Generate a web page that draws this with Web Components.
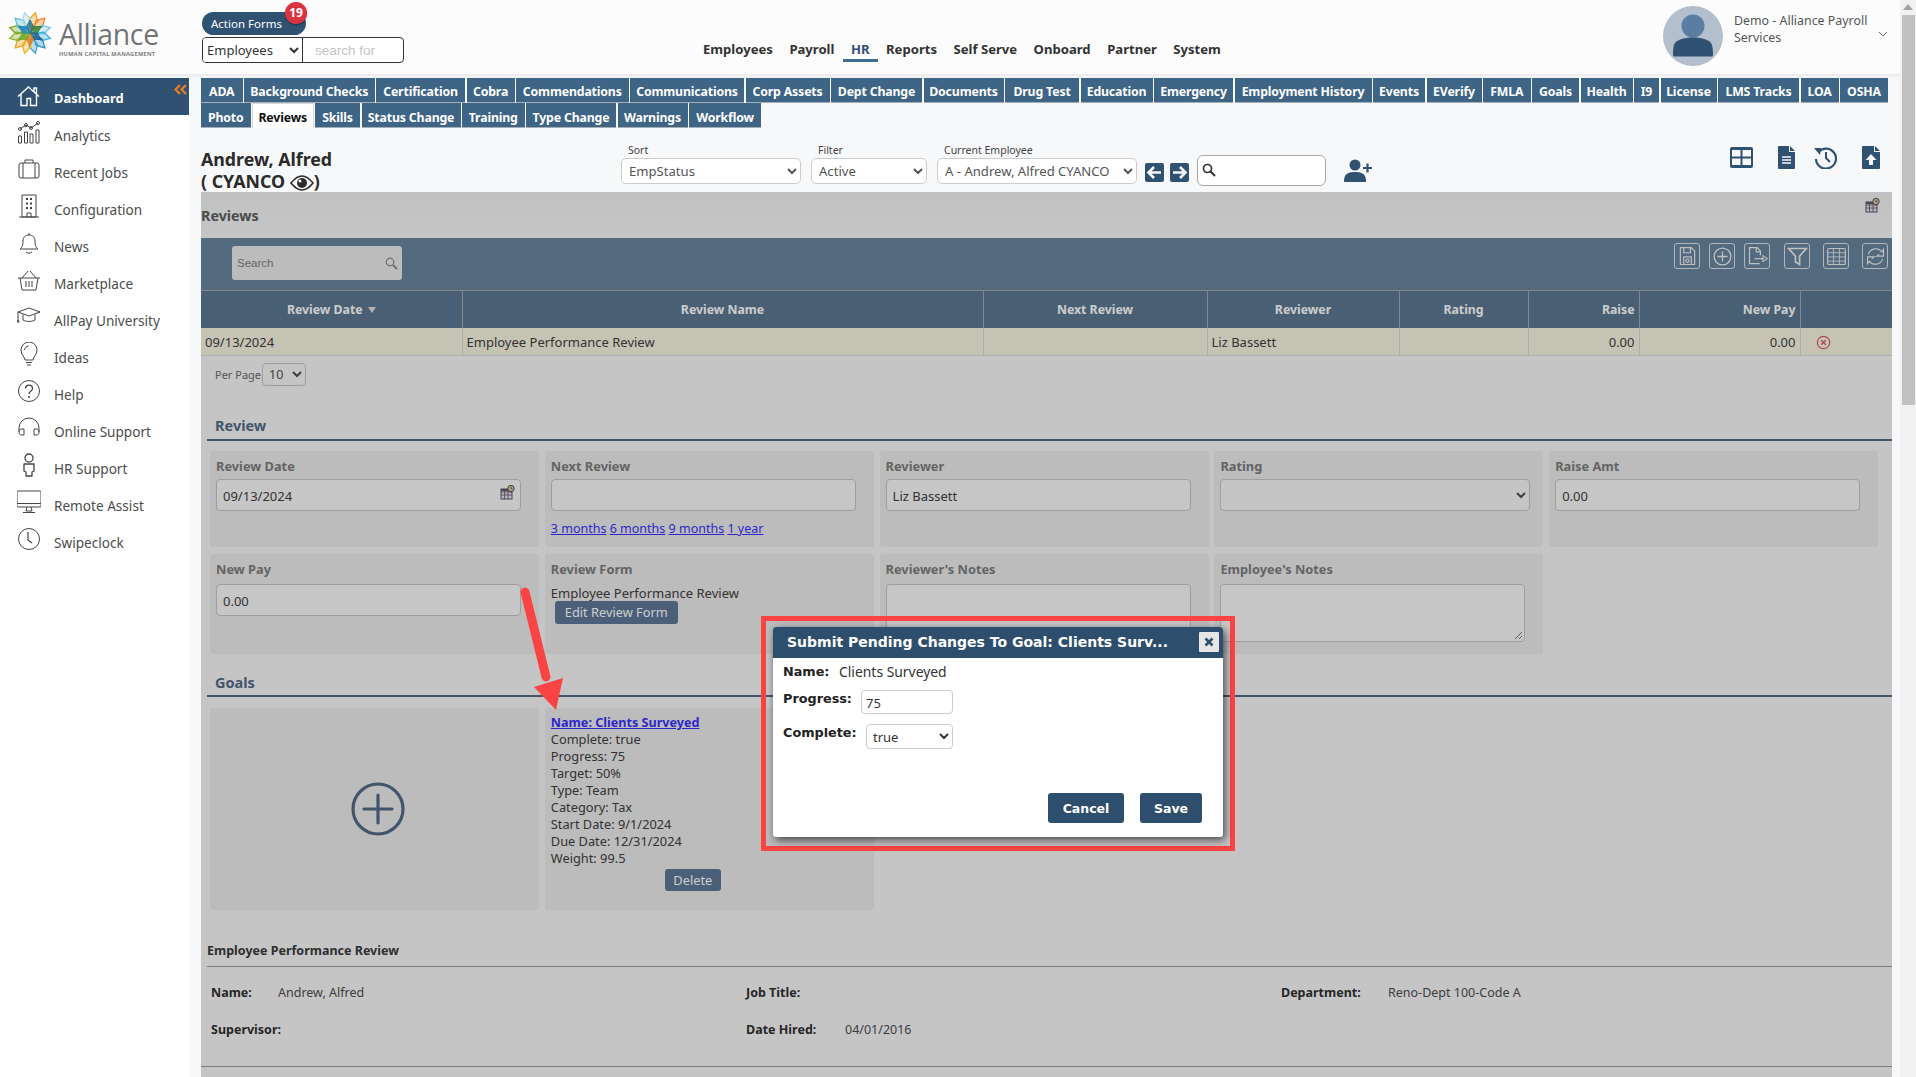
<!DOCTYPE html>
<html><head><meta charset="utf-8"><title>Reviews</title>
<style>
html,body{margin:0;padding:0;height:1077px;overflow:hidden;background:#f3f4f6;font-family:"Noto Sans","Open Sans",sans-serif;font-size:13px;color:#404040}
</style></head><body>
<app-shell>
  <app-header slot="header"></app-header>
  <app-sidebar slot="side"></app-sidebar>
  <app-tabs slot="main"></app-tabs>
  <emp-bar slot="main"></emp-bar>
  <review-page slot="main"></review-page>
  <fake-scroll slot="scroll"></fake-scroll>
  <red-arrow slot="over"></red-arrow>
  <goal-dialog slot="over"></goal-dialog>
</app-shell>
<script>
const def=(name,css,html)=>customElements.define(name,class extends HTMLElement{
  connectedCallback(){ if(this.shadowRoot) return;
    const r=this.attachShadow({mode:'open'});
    r.innerHTML='<style>'+css+'</style>'+(typeof html==='function'?html(this):html);
  }});
const S=(w,h,vb,body,extra='')=>`<svg width="${w}" height="${h}" viewBox="${vb}" ${extra}>${body}</svg>`;

def('app-shell',`
:host{display:grid;position:relative;grid-template-columns:1900px 16px;width:1916px;height:1077px;overflow:hidden}
.l{display:flex;flex-direction:column;height:1077px}
.b{display:flex;flex:1;margin-top:4px;min-height:0}
.m{flex:1;padding:0 8px 0 12px;background:#f7f8fa;min-width:0}
`,`<div class="l"><slot name="header"></slot><div class="b"><slot name="side"></slot><div class="m"><slot name="main"></slot></div></div></div><slot name="scroll"></slot><slot name="over"></slot>`);

/* logo */
function logo(){
  const cols=['#f0a21e','#f58220','#7cc6e8','#3fb0dd','#2b8fc7','#44a5d8','#f2b51d','#f0a21e','#8fb52d','#7bab2a','#5fc4d8','#a9dbe9'];
  let s='';
  cols.forEach((c,i)=>{ s+=`<polygon transform="rotate(${i*30+15} 24 22)" points="24,1 28.5,9 24,17 19.5,9" fill="${c}" fill-opacity=".35" stroke="${c}" stroke-width="1.3"/>`;});
  const c2=['#1f6f8f','#2e7d32','#1c5d8a','#e07b1a','#6aa82a','#1a84b8'];
  c2.forEach((c,i)=>{ s+=`<polygon transform="rotate(${i*60} 24 22)" points="24,9 27.5,15.5 24,22 20.5,15.5" fill="${c}" fill-opacity=".75" stroke="${c}" stroke-width=".9"/>`;});
  return S(48,44,'0 0 48 44',s);
}
def('app-header',`
:host{display:flex;height:74px;background:#fcfcfd;box-shadow:0 1px 3px rgba(0,0,0,.06);color:#333;position:relative}
.lg{width:202px;box-sizing:border-box;padding:11px 0 0 6px;display:flex;gap:5px;position:relative}
.lg svg{flex:none}
.brand{font:400 28.400px/34px "Open Sans",sans-serif;color:#737476;letter-spacing:-.3px;margin-top:6px;height:34px}
.tag{position:absolute;left:59px;top:50px;font:700 5.700px/8px "Noto Sans",sans-serif;color:#7b7c7e;letter-spacing:.25px;white-space:nowrap}
.af{width:501px;box-sizing:border-box;padding-top:12px;position:relative}
.pill{width:104px;height:23px;box-sizing:border-box;background:#2f5273;color:#fff;border-radius:12px;font-size:11.500px;line-height:23px;padding-left:9px}
.badge{position:absolute;left:83px;top:2px;width:22px;height:22px;border-radius:50%;background:#d9343f;color:#fff;font:700 12px/22px "Noto Sans",sans-serif;text-align:center;box-shadow:0 1px 2px rgba(0,0,0,.4)}
.sr{display:flex;margin-top:2px;width:202px;height:26px;box-sizing:border-box;border:1px solid #333;border-radius:4px;overflow:hidden;background:#fff}
select{width:100px;border:0;border-right:1px solid #333;background:#fff;font:13px "Noto Sans",sans-serif;color:#333;padding:0;outline:0}
.q{flex:1;color:#c4c4c4;font:13.500px/26px "Liberation Sans",sans-serif;padding-left:12px}
nav{display:flex;gap:16.500px;padding-top:39px;flex:1;font-size:13.100px;font-weight:700;line-height:20px}
nav span{position:relative;white-space:nowrap}
nav .on{color:#2f5273}
nav .on::after{content:"";position:absolute;left:-8px;right:-8px;top:20px;height:3px;background:#3e6c96}
.u{width:237px;flex:none;display:flex;position:relative;box-sizing:border-box;padding:6px 0 0 0}
.u svg{flex:none}
.u div{font-size:12.400px;line-height:17px;color:#555;width:150px;margin:6px 0 0 11px}
.u svg.ch{position:absolute;left:214px;top:30px}
`,`<div class="lg">${logo()}<div class="brand">Alliance</div><div class="tag">HUMAN CAPITAL MANAGEMENT</div></div>
<div class="af"><div class="pill">Action Forms</div><div class="badge">19</div>
<div class="sr"><select><option>Employees</option></select><div class="q">search for</div></div></div>
<nav><span>Employees</span><span>Payroll</span><span class="on">HR</span><span>Reports</span><span>Self Serve</span><span>Onboard</span><span>Partner</span><span>System</span></nav>
<div class="u">${S(60,60,'0 0 60 60','<circle cx="30" cy="30" r="30" fill="#b3bfcd"/><circle cx="30" cy="20" r="11.500" fill="#5b7da2"/><path d="M10 49c0-2 0-9 2-12 3-4 11-5.500 18-5.500s15 1.500 18 5.500c2 3 2 10 2 12-0 1-1 1.500-2 1.500H12c-1 0-2-.5-2-1.500z" fill="#2f5273"/>')}
<div>Demo - Alliance Payroll Services</div>${S(12,8,'0 0 12 8','<path d="M2 2l4 4 4-4" fill="none" stroke="#666" stroke-width="1"/>','class="ch"')}</div>`);

const ic={
home:'<path d="M1 11.500L11.500 2 22 11.500M4 9v11.500h6v-7h3.500v7h6V9M17 6.500V3h2.500v5.500" fill="none" stroke="#fff" stroke-width="1.400"/>',
an:'<path d="M3 9l6-4 5 3 7-5" fill="none" stroke="#444" stroke-width="1"/><circle cx="3" cy="9" r="1.500" fill="none" stroke="#444"/><circle cx="9" cy="5" r="1.500" fill="none" stroke="#444"/><circle cx="14" cy="8" r="1.500" fill="none" stroke="#444"/><circle cx="21" cy="3" r="1.500" fill="none" stroke="#444"/><path d="M1.500 16h3v7h-3zM7.500 12h3v11h-3zM13 14h3v9h-3zM19 10h3v13h-3z" fill="none" stroke="#444"/>',
job:'<rect x="2" y="6" width="20" height="15" rx="2" fill="none" stroke="#444"/><path d="M8 6V3h8v3M6 6v15M18 6v15" fill="none" stroke="#444"/>',
cfg:'<path d="M5 1h14v22H5zM2 23h20M10 23v-4h4v4" fill="none" stroke="#444"/><path d="M9 4h2v2H9zM13 4h2v2h-2zM9 8.500h2v2H9zM13 8.500h2v2h-2zM9 13h2v2H9zM13 13h2v2h-2z" fill="#444"/>',
bell:'<path d="M3 18c2-2 3-3 3-8 0-4 2.500-6 6-6s6 2 6 6c0 5 1 6 3 8zM12 4V2M9 21c1.500 1.500 4.500 1.500 6 0" fill="none" stroke="#444"/>',
bask:'<path d="M1 10h22M3 10l2 12h14l2-12M5 10l6-7M19 10l-6-7M9 13v6M12 13v6M15 13v6" fill="none" stroke="#444"/>',
grad:'<path d="M1 7l11-4 11 4-11 4zM6 9.500V15c4 2 8 2 12 0V9.500M1 7v8M-.2 17l1.200-2 1.200 2z" fill="none" stroke="#444"/>',
bulb:'<path d="M8 18c0-3-4-5-4-10a8 8 0 0116 0c0 5-4 7-4 10zM9 20.500h6M10 23h4M7.500 8c0-2 2-4 4-4" fill="none" stroke="#444"/>',
q:'<circle cx="12" cy="12" r="10.500" fill="none" stroke="#444"/><path d="M8.500 9.500c0-4.500 7-4.500 7 0 0 3-3.500 2.500-3.500 5.500" fill="none" stroke="#444" stroke-width="1.300"/><circle cx="12" cy="18" r="1" fill="#444"/>',
head:'<path d="M2 16v-4a10 10 0 0120 0v4" fill="none" stroke="#444"/><path d="M7 13H5c-2 0-3 1-3 3s1 3 3 3h2zM17 13h2c2 0 3 1 3 3s-1 3-3 3h-2z" fill="none" stroke="#444"/>',
hr:'<circle cx="12" cy="5" r="4" fill="none" stroke="#444" stroke-width="1.300"/><path d="M7 11h10v7l-2 1v4H9v-4l-2-1z" fill="none" stroke="#444" stroke-width="1.300" stroke-linejoin="round"/>',
mon:'<rect x="0" y="1" width="24" height="16" rx="1" fill="none" stroke="#444"/><path d="M0 13.500h24M10 17l-1 4h6l-1-4M6 22.500h12" fill="none" stroke="#444"/>',
clk:'<circle cx="12" cy="12" r="10.500" fill="none" stroke="#444"/><path d="M11 5v8l4 3" fill="none" stroke="#444" stroke-width="1.200"/>'
};
const side=[['Analytics','an'],['Recent Jobs','job'],['Configuration','cfg'],['News','bell'],['Marketplace','bask'],['AllPay University','grad'],['Ideas','bulb'],['Help','q'],['Online Support','head'],['HR Support','hr'],['Remote Assist','mon'],['Swipeclock','clk']];
def('app-sidebar',`
:host{display:block;width:189px;background:#fff;flex:none;color:#4d4d4d}
.r{height:37px;display:flex;align-items:center;padding:3px 0 0 17px;font-size:13.600px;box-sizing:border-box;position:relative}
.r svg{flex:none;margin:-7px 13px 0 0}
.a{background:#2f5273;color:#fff;font-weight:700;font-size:12.900px}
.a svg{margin-top:-3px}
.r svg.col{position:absolute;left:174px;top:6px;margin:0}
`,`<div class="r a">${S(24,24,'0 0 24 24',ic.home)}Dashboard${S(13,11,'0 0 13 11','<path d="M6 1L1.500 5.500 6 10M12 1L7.500 5.500 12 10" fill="none" stroke="#f07d1a" stroke-width="2.200"/>','class="col"')}</div>`+side.map(s=>`<div class="r">${S(24,24,'0 0 24 24',ic[s[1]])}${s[0]}</div>`).join(''));

const t1=[['ADA',41.500],['Background Checks',130.500],['Certification',89],['Cobra',48],['Commendations',112.500],['Communications',114],['Corp Assets',84],['Dept Change',91],['Documents',80],['Drug Test',74],['Education',72],['Emergency',79],['Employment History',137],['Events',52],['EVerify',55],['FMLA',47.500],['Goals',47],['Health',52],['I9',25],['License',56],['LMS Tracks',81],['LOA',38],['OSHA',48]];
const t2=[['Photo',49.500],['Reviews',61.500,1],['Skills',45],['Status Change',99],['Training',62.500],['Type Change',90],['Warnings',70],['Workflow',72]];
const tabrow=a=>`<div class="row">`+a.map(t=>`<span class="${t[2]?'on':''}" style="width:${t[1]}px">${t[0]}</span>`).join('')+`</div>`;
def('app-tabs',`
:host{display:block;height:50px}
.row{display:flex;gap:1.500px;height:25px}
span{box-sizing:border-box;background:#3e6585;color:#fff;font-weight:700;font-size:12.300px;letter-spacing:-.15px;line-height:27.500px;text-align:center;border-bottom:1px solid #a5adb5;white-space:nowrap;overflow:hidden;flex:none}
.row+.row span{line-height:29px}
.row+.row span.on{background:#fff;color:#111;border:1px solid #d4dade;border-bottom:0;line-height:27.500px}
`,tabrow(t1)+tabrow(t2));

def('emp-bar',`
:host{display:flex;height:64px;position:relative;color:#333}
.n{width:420px;flex:none;font-size:17.800px;font-weight:700;line-height:22px;padding-top:20px;color:#2b2b2b;box-sizing:border-box;height:64px;white-space:nowrap}
.n svg{vertical-align:-3px}
.f{display:flex;flex-direction:column;padding-top:15px;margin-right:10px}
label{font-size:10.500px;line-height:14px;height:15px;padding-left:7px;color:#444}
select{height:26px;box-sizing:border-box;border:1px solid #ccc;border-radius:5px;background:#fff;font:13.100px "Noto Sans",sans-serif;color:#555;padding-left:3px;outline:0}
.arr{display:flex;gap:6px;margin:35px 0 0 -2px;height:19px}
.arr b{width:19px;height:19px;background:#2f5273;border-radius:2px;display:block}
.s{width:129px;height:31px;box-sizing:border-box;border:1px solid #a8a8a8;border-radius:6px;background:#fff;margin:27px 0 0 8px;padding:7px 0 0 4px;flex:none}
.add{margin:31px 0 0 18px}
.ri{position:absolute;top:18px;left:1529px;display:flex;align-items:center}
`,`<div class="n">Andrew, Alfred<br>( CYANCO ${S(24,16,'0 0 24 16','<path d="M1 8c4-5 7.500-7 11-7s7 2 11 7c-4 5-7.500 7-11 7S5 13 1 8z" fill="none" stroke="#2b2b2b" stroke-width="1.600"/><circle cx="12" cy="8" r="5" fill="#2b2b2b"/><circle cx="10" cy="6" r="1.500" fill="#fff"/>')})</div>
<div class="f"><label>Sort</label><select style="width:180px"><option>EmpStatus</option></select></div>
<div class="f"><label>Filter</label><select style="width:116px"><option>Active</option></select></div>
<div class="f"><label>Current Employee</label><select style="width:200px"><option>A - Andrew, Alfred CYANCO</option></select></div>
<div class="arr"><b>${S(19,19,'0 0 19 19','<path d="M16 9.500H4M9 4l-5.500 5.500L9 15" fill="none" stroke="#f5f7f9" stroke-width="2.600"/>')}</b><b>${S(19,19,'0 0 19 19','<path d="M3 9.500h12M10 4l5.500 5.500L10 15" fill="none" stroke="#f5f7f9" stroke-width="2.600"/>')}</b></div>
<div class="s">${S(14,14,'0 0 14 14','<circle cx="5.500" cy="5.500" r="4" fill="none" stroke="#333" stroke-width="1.700"/><path d="M8.500 8.500l4.500 4.500" stroke="#333" stroke-width="2"/>')}</div>
<div class="add">${S(28,23,'0 0 28 23','<circle cx="11" cy="6" r="5.500" fill="#2f5273"/><path d="M0 23c0-1 0-4 1-6 2-3.500 6-4 10-4s8 .5 10 4c1 2 1 5 1 6z" fill="#2f5273"/><path d="M19 9h9M23.500 4.500v9" stroke="#2f5273" stroke-width="2.200"/>')}</div>
<div class="ri">${S(23,21,'0 0 23 21','<rect width="23" height="21" rx="2" fill="#2f5273"/><path d="M2 3h8.500v6.500H2zM12.500 3H21v6.500h-8.500zM2 11.500h8.500V18H2zM12.500 11.500H21V18h-8.500z" fill="#f7f8fa"/>')}
<span style="width:25px"></span>${S(17,23,'0 0 17 23','<path d="M0 1a1 1 0 011-1h10v6h6v16a1 1 0 01-1 1H1a1 1 0 01-1-1z" fill="#2f5273"/><path d="M12 0l5 5h-5z" fill="#2f5273"/><path d="M4 11h9M4 14h9M4 17h9" stroke="#f7f8fa" stroke-width="1.300"/>')}
<span style="width:19px"></span>${S(23,23,'0 0 23 23','<path d="M4.500 6A10 10 0 112 13" fill="none" stroke="#2f5273" stroke-width="2.200"/><path d="M0 2l7 0-1 7z" fill="#2f5273"/><path d="M12 6v6l4 4" fill="none" stroke="#2f5273" stroke-width="2"/>')}
<span style="width:25px"></span>${S(18,23,'0 0 18 23','<path d="M0 1a1 1 0 011-1h11v6h6v16a1 1 0 01-1 1H1a1 1 0 01-1-1z" fill="#2f5273"/><path d="M13 0l5 5h-5z" fill="#2f5273"/><path d="M9 8l5.500 6H11v5H7v-5H3.500z" fill="#f7f8fa"/>')}</div>`);

const cal=S(15,15,'0 0 15 15','<rect x="1" y="4" width="11" height="10" fill="#e6e3ee" stroke="#5c5566"/><path d="M1 7h11M1 10h11M4.500 4v10M8 4v10" stroke="#5c5566" stroke-width=".8"/><path d="M1 4h11v2H1z" fill="#5c5566"/><circle cx="11" cy="3.500" r="3.200" fill="#d8d0b0" stroke="#5c5040"/><path d="M11 1.800v1.900h1.500" fill="none" stroke="#333" stroke-width=".7"/>');

const tb=[
'<path d="M4 2h13l4 4v16H4zM8 2v6h8V2M8 22v-9h9v9" fill="none" stroke="#f0f0f0" stroke-width="1.400"/><circle cx="12.500" cy="17.500" r="2" fill="none" stroke="#f0f0f0" stroke-width="1.400"/>',
'<circle cx="12.500" cy="12.500" r="10" fill="none" stroke="#f0f0f0" stroke-width="1.500"/><path d="M12.500 6.500v12M6.500 12.500h12" stroke="#f0f0f0" stroke-width="1.500"/>',
'<path d="M15 21H3V2h9l4 4v5" fill="none" stroke="#f0f0f0" stroke-width="1.400"/><path d="M11 2v5h5M9 15h11" fill="none" stroke="#f0f0f0" stroke-width="1.400"/><path d="M19 11.500l5 3.500-5 3.500z" fill="none" stroke="#f0f0f0" stroke-width="1.200"/>',
'<path d="M2 3h21l-8 9v10l-5-3v-7z" fill="none" stroke="#f0f0f0" stroke-width="2"/>',
'<rect x="2" y="3" width="21" height="19" rx="1.500" fill="none" stroke="#f0f0f0" stroke-width="1.400"/><path d="M2 8h21M2 13h21M2 18h21M9 3v19M16 3v19" stroke="#f0f0f0"/>',
'<path d="M4 10a9 9 0 0116-3l2-3v8h-8l3-2M21 15a9 9 0 01-16 3l-2 3v-8h8l-3 2" fill="none" stroke="#f0f0f0" stroke-width="1.300"/>'];
def('tool-bar',`
:host{display:flex;height:52px;background:#68859f;position:relative;align-items:flex-start}
.s{width:170px;height:34px;margin:8px 0 0 31px;background:#ececec;border-radius:3px;box-sizing:border-box;color:#7d7d7d;font:11.500px/35px "Liberation Sans",sans-serif;padding-left:5px;position:relative}
.s svg{position:absolute;right:4px;top:11px}
.i{position:absolute;top:5px;width:26px;height:26px;box-sizing:border-box;border:1px solid #dfe3e8;border-radius:3px;display:flex;align-items:center;justify-content:center}
`,`<div class="s">Search${S(13,13,'0 0 13 13','<circle cx="5" cy="5" r="3.800" fill="none" stroke="#8a8a8a" stroke-width="1.200"/><path d="M8 8l4 4" stroke="#8a8a8a" stroke-width="1.800"/>')}</div>`+
[1473,1508,1543,1583,1622,1661].map((x,i)=>`<div class="i" style="left:${x}px">${S(21,21,'0 0 25 25',tb[i])}</div>`).join(''));

def('data-table',`
:host{display:block}
table{width:1691px;table-layout:fixed;border-collapse:collapse;font-size:13px}
th{height:37px;box-sizing:border-box;background:#5c7792;color:#fff;font-weight:700;font-size:12.300px;border-top:1px solid #a8a8a8;border-right:1px solid #a8a8a8;padding:0 4px;text-align:center}
th.r,td.r{text-align:right}
td{height:28px;box-sizing:border-box;background:#f7f6e1;border-right:1px solid #d8d8d8;border-bottom:1px solid #dcdcdc;padding:2px 4px 0;white-space:nowrap;color:#404040}
th:last-child,td:last-child{border-right:0}
.tri{display:inline-block;border:4px solid transparent;border-top:6px solid #e0e0e0;border-bottom:0;margin-left:5px;vertical-align:1px}
`,`<table><colgroup><col style="width:261px"><col style="width:521px"><col style="width:224px"><col style="width:192px"><col style="width:129px"><col style="width:111px"><col style="width:161px"><col style="width:92px"></colgroup>
<tr><th>Review Date<i class="tri"></i></th><th>Review Name</th><th>Next Review</th><th>Reviewer</th><th>Rating</th><th class="r">Raise</th><th class="r">New Pay</th><th></th></tr>
<tr><td>09/13/2024</td><td>Employee Performance Review</td><td></td><td>Liz Bassett</td><td></td><td class="r">0.00</td><td class="r">0.00</td><td style="padding-left:15px">${S(15,15,'0 0 15 15','<circle cx="7.500" cy="7.500" r="6.200" fill="none" stroke="#e05a68" stroke-width="1.200"/><path d="M5.200 5.200l4.600 4.600M9.800 5.200l-4.600 4.600" stroke="#e05a68" stroke-width="1.400"/>','style="vertical-align:-3px"')}</td></tr></table>`);

def('sec-head',`
:host{display:block;margin-left:6px;border-bottom:2px solid #536b85;color:#536b85;font-weight:700;font-size:14.500px;padding-left:8px;line-height:20px;box-sizing:border-box}
`,`<slot></slot>`);

def('form-panel',`
:host{display:block;background:#ebebeb;border-radius:3px;padding:6px 6px;box-sizing:border-box;position:relative;font-size:13px}
h4{margin:0;font-size:12.800px;line-height:18px;color:#7d7d7d;font-weight:700;height:var(--gap,22px)}
`,p=>(p.getAttribute('label')?`<h4>${p.getAttribute('label')}</h4>`:'')+`<slot></slot>`);

def('text-box',`
:host{display:block;width:305px;height:32px;box-sizing:border-box;border:1px solid #c6c6c6;border-radius:4px;background:#f8f8f8;padding:0 6px;line-height:32px;color:#404040;font-size:13px;position:relative}
svg{position:absolute;right:5px;top:5px}
`,p=>`<slot></slot>`+(p.hasAttribute('cal')?cal:''));

def('goal-card',`
:host{display:block;position:relative;height:190px;padding-top:0}
.ln{line-height:17px;font-size:12.800px;color:#404040;white-space:nowrap}
a{color:#3a30ff;text-decoration:underline;font-weight:700;font-size:12.600px}
.del{position:absolute;left:114px;top:155px;width:56px;height:22px;line-height:22px;background:#5e7897;color:#fff;border-radius:3px;text-align:center;font-size:12.800px}
`,`<div class="ln"><a>Name: Clients Surveyed</a><br>Complete: true<br>Progress: 75<br>Target: 50%<br>Type: Team<br>Category: Tax<br>Start Date: 9/1/2024<br>Due Date: 12/31/2024<br>Weight: 99.5</div><div class="del">Delete</div>`);
def('add-goal',`:host{display:flex;align-items:center;justify-content:center;height:202px;padding-left:7px;box-sizing:border-box}`,
 S(54,54,'0 0 54 54','<circle cx="27" cy="27" r="25" fill="none" stroke="#536b85" stroke-width="3.200"/><path d="M27 13v28M13 27h28" stroke="#536b85" stroke-width="3.200" stroke-linecap="round"/>'));

def('review-page',`
:host{display:block;position:relative;height:885px;background:linear-gradient(#f0f2f1 0,#f7f7f7 46px);overflow:hidden}
.ttl{height:46px;box-sizing:border-box;padding-top:15px;line-height:18px;font-weight:700;font-size:14.300px;color:#5e5e5e;position:relative}
.ttl svg{position:absolute;left:1664px;top:6px}
.pp{box-sizing:border-box;padding:0 0 0 14px;display:flex;align-items:center;height:37px;font-size:11px;color:#6a6a6a}
select{font:12.500px "Noto Sans",sans-serif;background:#f7f7f7;border:1px solid #c6c6c6;border-radius:4px;color:#505050;outline:0}
.pp select{width:44px;height:23px;margin-left:1px;padding:0 2px}
.grid{display:grid;grid-template-columns:repeat(5,329px);gap:7px 5.800px;padding:10px 0 0 9px;grid-template-rows:96px 100px}
a{color:#3a30ff;text-decoration:underline}
.lk{margin-top:9px;font-size:12.500px;line-height:18px;white-space:nowrap}
.btn{display:inline-block;background:#5e7897;color:#fff;border-radius:3px;font-size:12.800px;text-align:center}
.rt{width:310px;height:32px;display:block;padding-left:4px}
.ta{width:305px;height:58px;box-sizing:border-box;border:1px solid #c6c6c6;border-radius:4px;background:#f8f8f8;position:relative}
.ta svg{position:absolute;right:1px;bottom:1px}
.goals{display:grid;grid-template-columns:329px 329px;gap:5.800px;padding:11px 0 0 9px}
.ft{margin:32px 0 0 6px}
.ft h5{margin:0;font-size:12.500px;line-height:18px;color:#3a3a3a;border-bottom:1px solid #9a9a9a;height:24px;font-weight:700;box-sizing:content-box}
.fr{display:grid;grid-template-columns:535px 535px 1fr;padding-left:4px;height:37px;align-items:center;font-size:12.500px;color:#4d4d4d;line-height:18px}
.fr b{display:inline-block;color:#303030;font-weight:700}
.ov{position:absolute;inset:0;background:rgba(0,0,0,.2);pointer-events:none}
.r2{--gap:24px}
`,`<div class="ttl">Reviews${cal}</div>
<tool-bar></tool-bar><data-table></data-table>
<div class="pp">Per Page<select><option>10</option></select></div>
<sec-head style="height:48px;padding-top:22px">Review</sec-head>
<div class="grid">
 <form-panel label="Review Date"><text-box cal>09/13/2024</text-box></form-panel>
 <form-panel label="Next Review"><text-box></text-box><div class="lk"><a>3 months</a> <a>6 months</a> <a>9 months</a> <a>1 year</a></div></form-panel>
 <form-panel label="Reviewer"><text-box>Liz Bassett</text-box></form-panel>
 <form-panel label="Rating"><select class="rt"><option></option></select></form-panel>
 <form-panel label="Raise Amt"><text-box>0.00</text-box></form-panel>
 <form-panel class="r2" label="New Pay"><text-box>0.00</text-box></form-panel>
 <form-panel class="r2" label="Review Form"><div style="line-height:16px;margin-top:1px;white-space:nowrap">Employee Performance Review</div><div class="btn" style="width:123px;height:23px;line-height:23px;margin-left:4px;">Edit Review Form</div></form-panel>
 <form-panel class="r2" label="Reviewer's Notes"><div class="ta"></div></form-panel>
 <form-panel class="r2" label="Employee's Notes"><div class="ta">${S(10,10,'0 0 10 10','<path d="M9 2L2 9M9 6L6 9" stroke="#777"/>')}</div></form-panel>
</div>
<sec-head style="height:43px;padding-top:18px">Goals</sec-head>
<div class="goals">
 <form-panel style="height:202px;padding:0"><add-goal></add-goal></form-panel>
 <form-panel style="height:202px;padding:6px 6px"><goal-card></goal-card></form-panel>
</div>
<div class="ft"><h5>Employee Performance Review</h5>
 <div class="fr" style="margin-top:7px"><span><b style="width:67px">Name:</b>Andrew, Alfred</span><span><b>Job Title:</b></span><span><b style="width:107px">Department:</b>Reno-Dept 100-Code A</span></div>
 <div class="fr"><span><b>Supervisor:</b></span><span><b style="width:99px">Date Hired:</b>04/01/2016</span><span></span></div>
 <div style="margin:18px 0 0 -6px;border-top:1px solid #9a9a9a"></div>
</div>
<div class="ov"></div>`);

def('fake-scroll',`
:host{display:block;background:#f1f1f1;height:1077px;position:relative}
.t{position:absolute;left:2px;top:15px;width:13px;height:390px;background:#c1c1c1}
svg{position:absolute;left:3px;top:4px}
`,`${S(10,6,'0 0 10 6','<path d="M5 0l5 6H0z" fill="#a3a3a3"/>')}<div class="t"></div>`);

def('red-arrow',`
:host{position:absolute;left:515px;top:585px;width:60px;height:130px;display:block}
`,S(60,130,'0 0 60 130','<path d="M10 7L31 92" stroke="#fa4444" stroke-width="9" stroke-linecap="round"/><path d="M41 125L19 102 48 93z" fill="#fa4444"/>'));

def('goal-dialog',`
:host{position:absolute;left:761px;top:616px;width:474px;height:235px;box-sizing:border-box;border:5px solid #fa4444;padding:6px 7px;display:block}
.d{width:450px;height:210px;background:#fff;border-radius:3px;box-shadow:2px 3px 9px rgba(0,0,0,.65);position:relative;color:#333;font:13.900px "Noto Sans",sans-serif}
.t{height:31px;background:#2d4f6d;color:#fff;border-radius:3px 3px 0 0;font:700 14px/31px "DejaVu Sans",sans-serif;padding-left:14px;white-space:nowrap;position:relative}
.x{position:absolute;right:4px;top:5px;width:20px;height:20px;background:#e6e6e6;border-radius:1px;display:flex;align-items:center;justify-content:center}
.r{display:flex;padding-left:10px;align-items:flex-start}
b{font:700 12.800px/18px "DejaVu Sans",sans-serif;color:#222}
.v{height:24px;box-sizing:border-box;border:1px solid #ccc;border-radius:4px;padding-left:4px;line-height:24px;color:#333;font-size:13px}
select{height:25px;box-sizing:border-box;width:87px;border:1px solid #ccc;border-radius:4px;background:#fff;font:13px "Noto Sans",sans-serif;color:#333;padding-left:2px;outline:0}
.bt{position:absolute;top:166px;height:30px;background:#2d4f6d;color:#fff;font:700 12.500px/31px "DejaVu Sans",sans-serif;text-align:center;border-radius:3px}
`,`<div class="d"><div class="t">Submit Pending Changes To Goal: Clients Surv...<div class="x">${S(10,10,'0 0 10 10','<path d="M1.500 1.500l7 7M8.500 1.500l-7 7" stroke="#2d4f6d" stroke-width="2.600"/>')}</div></div>
<div class="r" style="margin-top:5px"><b style="width:56px">Name:</b><span style="line-height:18px">Clients Surveyed</span></div>
<div class="r" style="margin-top:5px"><b style="width:78px;margin-top:4px">Progress:</b><div class="v" style="width:92px;margin-top:4px">75</div></div>
<div class="r" style="margin-top:10px"><b style="width:83px">Complete:</b><select><option>true</option></select></div>
<div class="bt" style="left:275px;width:76px">Cancel</div><div class="bt" style="left:367px;width:62px">Save</div></div>`);
</script>
</body></html>
